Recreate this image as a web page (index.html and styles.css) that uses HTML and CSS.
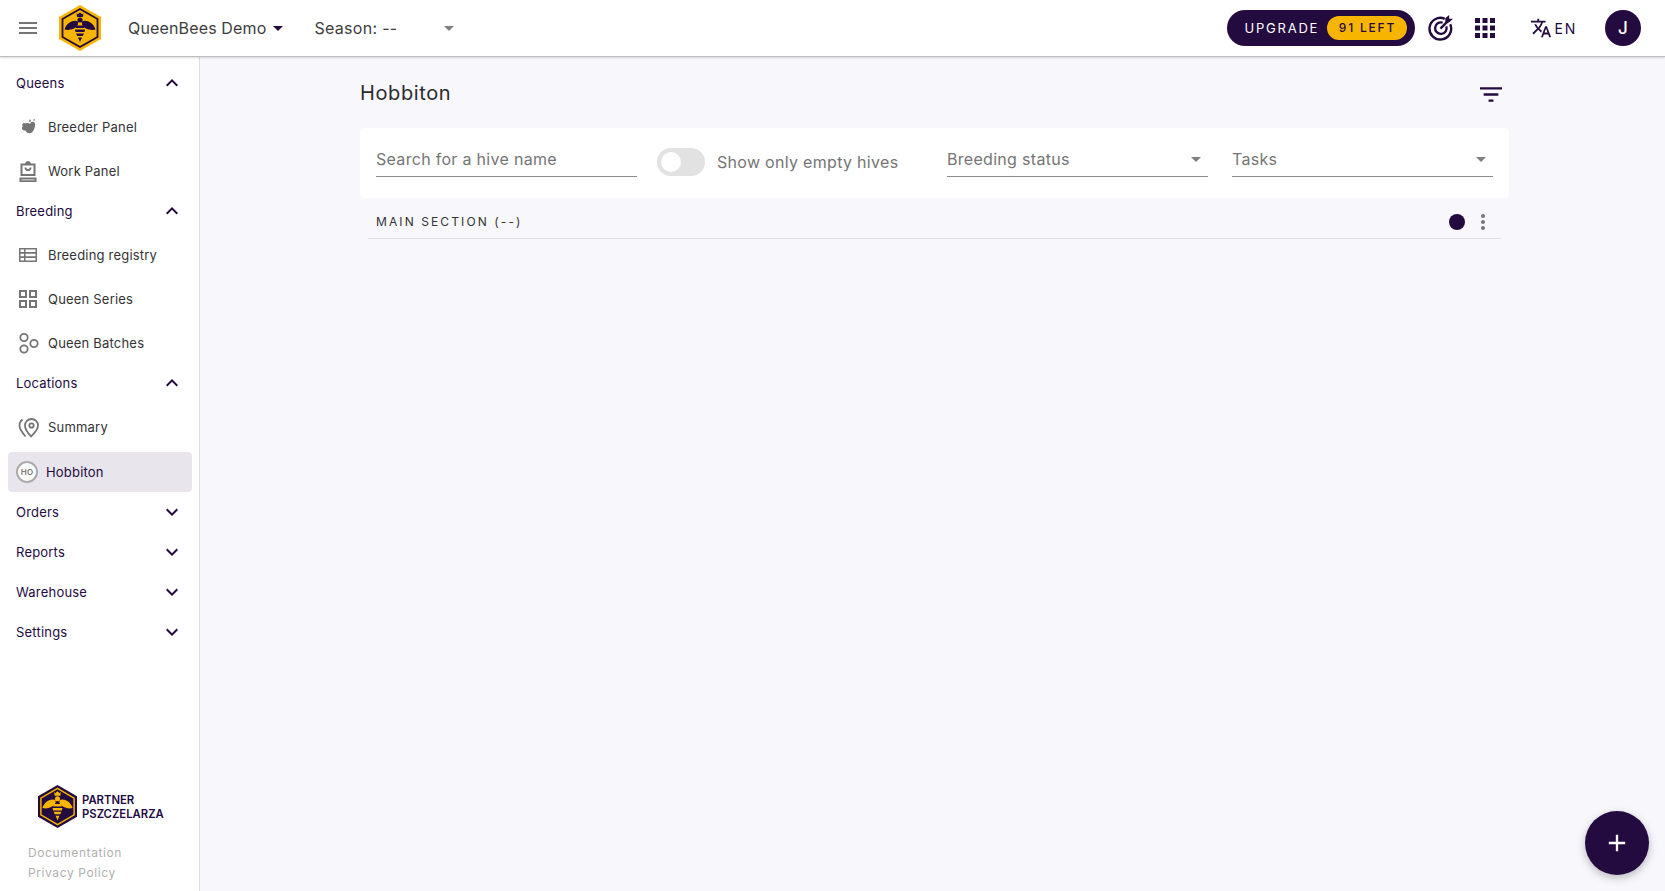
FILE: index.html
```html
<!DOCTYPE html>
<html lang="en">
<head>
  <meta charset="UTF-8">
  <meta name="viewport" content="width=device-width, initial-scale=1.0">
  <title>Hobbiton</title>
  <link rel="stylesheet" href="styles.css">
</head>
<body>
  <svg class="defs" width="0" height="0">
    <symbol id="bee" viewBox="0 0 42 46">
      <path d="M17.500 8l1.200 1.300L21 7.500l2.300 1.800L24.500 8l-.6 4h-5.800z"/>
      <circle cx="21" cy="15" r="2.600"/>
      <path d="M19 16.500C15 14.500 8 17 5.500 24.500c4.500 1.200 10.500 0 13.500-5zM23 16.500c4-2 11 .5 13.500 8-4.500 1.200-10.500 0-13.500-5z"/>
      <path d="M17.500 20.500h7l1 2.500h-9zM16 24.500h10l-.5 2.500h-9zM17 28.500h8l-1.200 2.500h-5.600zM19 32.500h4L21 37z"/>
    </symbol>
  </svg>

  <header class="topbar">
    <svg class="menu-icon" viewBox="0 0 24 24"><path d="M3 18h18v-2H3v2zm0-5h18v-2H3v2zm0-7v2h18V6H3z"/></svg>
    <svg class="logo" viewBox="0 0 42 46">
      <polygon class="hex-outer" points="21,0 42,12 42,34 21,46 0,34 0,12"/>
      <polygon class="hex-line" points="21,4 38.500,14 38.500,32 21,42 3.500,32 3.500,14"/>
      <use href="#bee" class="logo-bee"/>
    </svg>
    <div class="org">QueenBees Demo<span class="caret caret-dark"></span></div>
    <div class="season"><span>Season: --</span><span class="caret"></span></div>

    <div class="top-right">
      <div class="upgrade">
        <span>UPGRADE</span>
        <span class="upgrade-left">91 LEFT</span>
      </div>
      <svg class="target-icon" viewBox="0 0 24 24">
        <path d="M20.500 8.500A10 10 0 1 1 15.500 3.500"/>
        <path d="M16.900 10.500A5.300 5.300 0 1 1 13.500 7.100"/>
        <path d="M11.500 12.500L18.500 5.500"/>
        <path class="target-fill" d="M16 7V3l3.500-3v3.500H23L19.500 7z"/>
      </svg>
      <svg class="apps-icon" viewBox="4 4 16 16"><path d="M4 8h4V4H4v4zm6 12h4v-4h-4v4zm-6 0h4v-4H4v4zm0-6h4v-4H4v4zm6 0h4v-4h-4v4zm6-10v4h4V4h-4zm-6 4h4V4h-4v4zm6 6h4v-4h-4v4zm0 6h4v-4h-4v4z"/></svg>
      <div class="lang">
        <svg viewBox="0 0 24 24"><path d="M12.870 15.070l-2.540-2.510.03-.03c1.740-1.940 2.980-4.170 3.710-6.530H17V4h-7V2H8v2H1v1.990h11.170C11.500 7.920 10.440 9.750 9 11.350 8.070 10.320 7.300 9.190 6.690 8h-2c.73 1.630 1.730 3.170 2.980 4.560l-5.090 5.020L4 19l5-5 3.110 3.110.76-2.040zM18.500 10h-2L12 22h2l1.120-3h4.750L21 22h2l-4.500-12zm-2.620 7l1.620-4.330L19.120 17h-3.240z"/></svg>
        EN
      </div>
      <div class="avatar">J</div>
    </div>
  </header>

  <div class="page">
    <aside class="sidebar">
      <nav class="nav">
        <div class="nav-head">Queens<svg viewBox="0 0 24 24"><path d="M12 8l-6 6 1.410 1.410L12 10.830l4.590 4.580L18 14z"/></svg></div>
        <a class="nav-item">
          <svg viewBox="0 0 24 24"><path d="M10 8.500c1.500-.7 3-.4 4 .5.500-1.500 1.500-2.300 2.800-2.300 1.700 0 2.700 1.700 2.200 4-.4 2.200-.9 4.500-2.600 6.200-1.400 1.300-3.500 1.700-5.200.8-.9-.5-1.300-1.300-1.600-2.200-1.300.4-3.100-.2-3.600-1.700-.4-1.300.2-2.200.9-2.600-.6-.4-.9-1.600-.3-2.400.8-1.100 2.100-.9 3.400-.3zM14 4l1.200 2.500-2.400.3zM18.500 3.500l.3 2.300-1.900-.5z"/></svg>
          Breeder Panel
        </a>
        <a class="nav-item">
          <svg viewBox="0 0 24 24"><path d="M12 2a3 3 0 0 1 3 2.500h4.500V17h-15V4.500H9A3 3 0 0 1 12 2zM6.500 6.500v8.500h11V6.500zM8.500 8.500h2c0 2 3 2 3 0h2c0 5-7 5-7 0zM3.500 18.500h17V23h-17zm2 2v.8h13v-.8z"/></svg>
          Work Panel
        </a>

        <div class="nav-head">Breeding<svg viewBox="0 0 24 24"><path d="M12 8l-6 6 1.410 1.410L12 10.830l4.590 4.580L18 14z"/></svg></div>
        <a class="nav-item">
          <svg viewBox="0 0 24 24"><path d="M3 5v14h18V5H3zm5 12.500H4.500v-2.500H8v2.500zm0-4.300H4.500v-2.400H8v2.400zM8 9H4.500V6.500H8V9zm11.500 8.500H9.500V15h10v2.500zm0-4.300h-10v-2.400h10v2.400zm0-4.200h-10V6.500h10V9z"/></svg>
          Breeding registry
        </a>
        <a class="nav-item">
          <svg viewBox="0 0 24 24"><path d="M3 3v8h8V3H3zm6 6H5V5h4v4zm-6 4v8h8v-8H3zm6 6H5v-4h4v4zm4-16v8h8V3h-8zm6 6h-4V5h4v4zm-6 4v8h8v-8h-8zm6 6h-4v-4h4v4z"/></svg>
          Queen Series
        </a>
        <a class="nav-item">
          <svg class="line-icon" viewBox="0 0 24 24">
            <circle cx="8" cy="6.500" r="3.700"/>
            <circle cx="8" cy="18" r="3.700"/>
            <circle cx="18" cy="12.500" r="3.700"/>
          </svg>
          Queen Batches
        </a>

        <div class="nav-head">Locations<svg viewBox="0 0 24 24"><path d="M12 8l-6 6 1.410 1.410L12 10.830l4.590 4.580L18 14z"/></svg></div>
        <a class="nav-item">
          <svg class="line-icon" viewBox="0 0 24 24">
            <path d="M15 21.500c-2.500-3-6-6.500-6-11a6.500 6.500 0 0 1 13 0c0 4.500-4 8-7 11z"/>
            <circle cx="15.500" cy="10.500" r="2.200"/>
            <path d="M6.500 4.500c-2 1.500-3 3.500-3 6 0 4 3 7.500 6 11"/>
          </svg>
          Summary
        </a>
        <a class="nav-item nav-item-active">
          <span class="loc-badge">HO</span>
          Hobbiton
        </a>

        <div class="nav-head">Orders<svg viewBox="0 0 24 24"><path d="M16.590 8.590L12 13.170 7.410 8.590 6 10l6 6 6-6z"/></svg></div>
        <div class="nav-head">Reports<svg viewBox="0 0 24 24"><path d="M16.590 8.590L12 13.170 7.410 8.590 6 10l6 6 6-6z"/></svg></div>
        <div class="nav-head">Warehouse<svg viewBox="0 0 24 24"><path d="M16.590 8.590L12 13.170 7.410 8.590 6 10l6 6 6-6z"/></svg></div>
        <div class="nav-head">Settings<svg viewBox="0 0 24 24"><path d="M16.590 8.590L12 13.170 7.410 8.590 6 10l6 6 6-6z"/></svg></div>
      </nav>

      <div class="side-footer">
        <div class="partner">
          <svg viewBox="0 0 42 46">
            <polygon class="partner-hex" points="21,1 41,12.500 41,33.500 21,45 1,33.500 1,12.500"/>
            <polygon class="partner-line" points="21,4.500 38,14.500 38,31.500 21,41.500 4,31.500 4,14.500"/>
            <use href="#bee" class="partner-bee"/>
          </svg>
          <div class="partner-name">PARTNER<br>PSZCZELARZA</div>
        </div>
        <a class="side-link">Documentation</a>
        <a class="side-link">Privacy Policy</a>
      </div>
    </aside>

    <main class="main">
      <div class="title-row">
        <h1>Hobbiton</h1>
        <svg viewBox="3 6 18 12"><path d="M10 18h4v-2h-4v2zM3 6v2h18V6H3zm3 7h12v-2H6v2z"/></svg>
      </div>

      <div class="filters">
        <input class="field search" placeholder="Search for a hive name">
        <div class="toggle-group">
          <div class="toggle"><div class="toggle-knob"></div></div>
          <span>Show only empty hives</span>
        </div>
        <div class="field select">Breeding status<span class="caret"></span></div>
        <div class="field select">Tasks<span class="caret"></span></div>
      </div>

      <div class="section-row">
        <span class="section-name">MAIN SECTION (--)</span>
        <span class="section-dot"></span>
        <svg viewBox="0 0 24 24"><path d="M12 8c1.100 0 2-.9 2-2s-.9-2-2-2-2 .9-2 2 .9 2 2 2zm0 2c-1.100 0-2 .9-2 2s.9 2 2 2 2-.9 2-2-.9-2-2-2zm0 6c-1.100 0-2 .9-2 2s.9 2 2 2 2-.9 2-2-.9-2-2-2z"/></svg>
      </div>
    </main>
  </div>

  <button class="fab">
    <svg viewBox="0 0 24 24"><path d="M19 13h-6v6h-2v-6H5v-2h6V5h2v6h6v2z"/></svg>
  </button>
</body>
</html>
```

FILE: styles.css
```css
* {
  margin: 0;
  padding: 0;
  box-sizing: border-box;
}

body {
  height: 100vh;
  display: flex;
  flex-direction: column;
  overflow: hidden;
  font-family: Inter, "Open Sans", sans-serif;
  color: #333;
  background: #f8f7fc;
}

.defs {
  position: absolute;
}

.topbar {
  height: 57px;
  flex-shrink: 0;
  display: flex;
  align-items: center;
  padding-left: 16px;
  background: white;
  border-bottom: 1px solid #bdbdbd;
  box-shadow: 0 1px 2px rgba(0, 0, 0, 0.15);
  position: relative;
  z-index: 2;
}

.menu-icon {
  width: 24px;
  height: 24px;
  fill: #757575;
}

.logo {
  width: 42px;
  height: 46px;
  margin-left: 19px;
}

.hex-outer {
  fill: #f7b500;
}

.hex-line {
  fill: #f7b500;
  stroke: #230a3f;
  stroke-width: 1.800;
}

.logo-bee {
  fill: #230a3f;
}

.org {
  display: flex;
  align-items: center;
  margin-left: 27px;
  font-size: 16px;
  letter-spacing: 0.15px;
  color: #3d3d3d;
}

.caret {
  display: inline-block;
  width: 0;
  height: 0;
  border-left: 5px solid transparent;
  border-right: 5px solid transparent;
  border-top: 5px solid #808080;
}

.caret-dark {
  border-top-color: #230a3f;
  margin-left: 7px;
}

.season {
  width: 140px;
  display: flex;
  align-items: center;
  justify-content: space-between;
  margin-left: 31px;
  font-size: 16px;
  letter-spacing: 0.3px;
  color: #3d3d3d;
}

.top-right {
  margin-left: auto;
  display: flex;
  align-items: center;
  padding-right: 24px;
}

.upgrade {
  width: 188px;
  height: 36px;
  display: flex;
  align-items: center;
  justify-content: space-between;
  padding: 0 8px 0 17px;
  border-radius: 18px;
  background: #230a3f;
  color: white;
  font-size: 13px;
  font-weight: 400;
  letter-spacing: 1.800px;
}

.upgrade-left {
  width: 80px;
  height: 24px;
  line-height: 24px;
  text-align: center;
  border-radius: 12px;
  background: #f7b500;
  color: #230a3f;
  font-size: 12px;
  font-weight: 500;
}

.target-icon {
  width: 26px;
  height: 26px;
  margin-left: 13px;
  fill: none;
  stroke: #230a3f;
  stroke-width: 2.200;
}

.target-fill {
  fill: #230a3f;
  stroke: none;
}

.apps-icon {
  width: 20px;
  height: 20px;
  margin-left: 21px;
  fill: #230a3f;
}

.lang {
  display: flex;
  align-items: center;
  gap: 2px;
  margin-left: 35px;
  font-size: 14px;
  font-weight: 400;
  letter-spacing: 1.800px;
  color: #230a3f;
}

.lang svg {
  width: 22px;
  height: 22px;
  fill: #230a3f;
}

.avatar {
  width: 36px;
  height: 36px;
  margin-left: 28px;
  border-radius: 50%;
  background: #230a3f;
  color: white;
  font-size: 17px;
  font-weight: 500;
  line-height: 36px;
  text-align: center;
}

.page {
  flex: 1;
  display: flex;
  min-height: 0;
}

.sidebar {
  width: 200px;
  flex-shrink: 0;
  display: flex;
  flex-direction: column;
  background: white;
  border-right: 1px solid #dcdcdc;
}

.nav {
  padding-top: 8px;
}

.nav-head {
  height: 40px;
  display: flex;
  align-items: center;
  justify-content: space-between;
  padding: 0 15px 4px 16px;
  font-size: 13px;
  letter-spacing: 0.2px;
  color: #230a3f;
}

.nav-head svg {
  width: 24px;
  height: 24px;
  fill: #230a3f;
}

.nav-item {
  height: 44px;
  display: flex;
  align-items: center;
  gap: 8px;
  padding-left: 16px;
  font-size: 13px;
  letter-spacing: 0.2px;
  color: #333;
}

.nav-item svg {
  width: 24px;
  height: 24px;
  fill: #757575;
}

.nav-item .line-icon {
  fill: none;
  stroke: #757575;
  stroke-width: 1.800;
}

.nav-item-active {
  height: 40px;
  margin: 3px 7px 2px 8px;
  padding-left: 8px;
  gap: 8px;
  border-radius: 4px;
  background: #e8e6ec;
  color: #230a3f;
}

.loc-badge {
  width: 22px;
  height: 22px;
  border: 2px solid #aaa;
  border-radius: 50%;
  background: white;
  color: #757575;
  font-size: 8px;
  font-weight: 600;
  line-height: 18px;
  text-align: center;
}

.side-footer {
  margin-top: auto;
  padding: 0 0 8px 28px;
}

.partner {
  display: flex;
  align-items: center;
  gap: 4px;
  margin: 0 0 14px 9px;
}

.partner svg {
  width: 41px;
  height: 45px;
}

.partner-hex {
  fill: #230a3f;
}

.partner-line {
  fill: #230a3f;
  stroke: #f7b500;
  stroke-width: 1.500;
}

.partner-bee {
  fill: #f7b500;
}

.partner-name {
  font-size: 11.300px;
  font-weight: 600;
  line-height: 14px;
  color: #230a3f;
}

.side-link {
  display: block;
  height: 20px;
  line-height: 20px;
  font-size: 12px;
  letter-spacing: 0.6px;
  color: #b0b0b0;
}

.main {
  flex: 1;
  padding: 0 156px 0 160px;
}

.title-row {
  height: 71px;
  display: flex;
  align-items: center;
  justify-content: space-between;
  padding-right: 7px;
}

.title-row h1 {
  font-size: 20px;
  font-weight: 400;
  letter-spacing: 0.6px;
  color: #2b2b2b;
}

.title-row svg {
  width: 22px;
  height: 15px;
  margin-top: 3px;
  fill: #230a3f;
}

.filters {
  height: 70px;
  display: flex;
  align-items: flex-start;
  gap: 24px;
  padding: 0 16px;
  border-radius: 4px;
  background: white;
}

.field {
  width: 261px;
  height: 49px;
  border: none;
  border-bottom: 1px solid #8c8c8c;
  font-family: inherit;
  font-size: 16px;
  letter-spacing: 0.3px;
  color: #757575;
  outline: none;
}

.search {
  padding-top: 14px;
}

.search::placeholder {
  color: #757575;
}

.select {
  display: flex;
  align-items: center;
  justify-content: space-between;
  padding: 14px 7px 0 0;
}

.toggle-group {
  flex: 1;
  display: flex;
  align-items: center;
  gap: 12px;
  height: 48px;
  margin: 10px 0 0 -4px;
  font-size: 16px;
  letter-spacing: 0.3px;
  color: #757575;
}

.toggle {
  width: 48px;
  height: 28px;
  padding: 4px;
  border-radius: 14px;
  background: #e2e2e2;
}

.toggle-knob {
  width: 20px;
  height: 20px;
  border-radius: 50%;
  background: white;
}

.section-row {
  height: 41px;
  display: flex;
  align-items: center;
  margin: 0 8px;
  padding: 7px 6px 0 8px;
  border-bottom: 1px solid #dedce4;
}

.section-name {
  flex: 1;
  font-size: 12px;
  font-weight: 400;
  letter-spacing: 2.100px;
  color: #333;
}

.section-dot {
  width: 16px;
  height: 16px;
  border-radius: 50%;
  background: #230a3f;
}

.section-row svg {
  width: 24px;
  height: 24px;
  margin-left: 6px;
  fill: #757575;
}

.fab {
  position: absolute;
  right: 16px;
  bottom: 16px;
  width: 64px;
  height: 64px;
  display: flex;
  align-items: center;
  justify-content: center;
  border: none;
  border-radius: 50%;
  background: #230a3f;
  box-shadow: 0 3px 8px rgba(0, 0, 0, 0.25);
}

.fab svg {
  width: 28px;
  height: 28px;
  fill: white;
}
```
